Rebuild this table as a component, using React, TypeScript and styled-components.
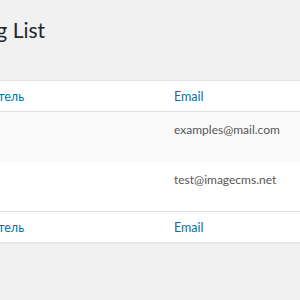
import styled, { createGlobalStyle } from "styled-components";

// ─── Global ───────────────────────────────────────────────────────────────────

const GlobalStyle = createGlobalStyle`
  html, body {
    margin: 0;
    padding: 0;
    background: #f1f1f1;
    overflow: hidden;
  }
  body {
    font-family: Lato, "Open Sans", "Liberation Sans", sans-serif;
    font-size: 12px;
    color: #444;
  }
`;

// ─── Styled Components ────────────────────────────────────────────────────────

const Page = styled.div`
  width: 300px;
  height: 300px;
  overflow: hidden;
  background: #f1f1f1;
`;

const Wrap = styled.div`
  width: 460px;
  margin-left: -67px;
  padding-top: 15px;
`;

const Title = styled.h1`
  margin: 0 0 35px 7px;
  font-size: 21px;
  font-weight: 400;
  line-height: 30px;
  color: #23282d;
`;

const ListTable = styled.table`
  width: 100%;
  border-collapse: collapse;
  background: #fff;
  border: 1px solid #e5e5e5;
  box-shadow: 0 1px 1px rgba(0, 0, 0, 0.04);
`;

const HeadRow = styled.tr<{ $foot?: boolean }>`
  height: 31px;
  ${({ $foot }) =>
    $foot ? "border-top: 1px solid #e1e1e1;" : "border-bottom: 1px solid #e1e1e1;"}
`;

const HeadCell = styled.th<{ $width?: number }>`
  width: ${({ $width }) => ($width ? `${$width}px` : "auto")};
  padding: 1px 10px 0;
  text-align: left;
  font-weight: 400;
  font-size: 12.5px;
  line-height: 20px;

  a {
    color: #0073aa;
    text-decoration: none;
  }
`;

const Row = styled.tr<{ $alt?: boolean }>`
  height: 50px;
  background: ${({ $alt }) => ($alt ? "#f9f9f9" : "#fff")};
`;

const Cell = styled.td`
  padding: 8px 10px;
  vertical-align: top;
  font-size: 12px;
  line-height: 20px;
  color: #555;
`;

// ─── Data ─────────────────────────────────────────────────────────────────────

const SUBSCRIBERS = [
  { user: "", email: "examples@mail.com" },
  { user: "", email: "test@imagecms.net" },
] as const;

// ─── Component ────────────────────────────────────────────────────────────────

function Columns({ foot }: { foot?: boolean }) {
  return (
    <HeadRow $foot={foot}>
      <HeadCell $width={210}>
        <a href="#">Пользователь</a>
      </HeadCell>
      <HeadCell>
        <a href="#">Email</a>
      </HeadCell>
    </HeadRow>
  );
}

export default function App() {
  return (
    <Page>
      <GlobalStyle />
      <Wrap>
        <Title>Mailing List</Title>
        <ListTable>
          <thead>
            <Columns />
          </thead>
          <tbody>
            {SUBSCRIBERS.map((s, i) => (
              <Row key={s.email} $alt={i % 2 === 0}>
                <Cell>{s.user}</Cell>
                <Cell>{s.email}</Cell>
              </Row>
            ))}
          </tbody>
          <tfoot>
            <Columns foot />
          </tfoot>
        </ListTable>
      </Wrap>
    </Page>
  );
}
